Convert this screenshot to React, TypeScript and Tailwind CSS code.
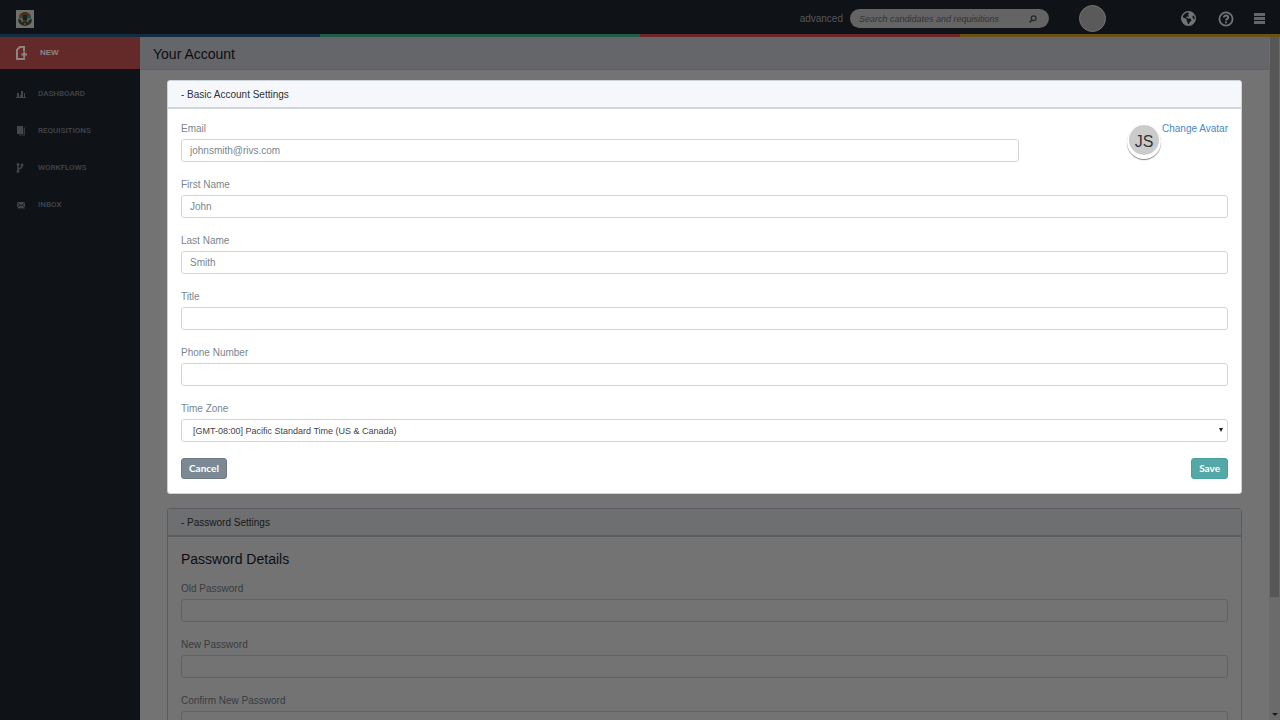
import type { ReactNode } from "react";
import { FaEarthAmericas } from "react-icons/fa6";

const FONT = "font-['Liberation_Sans',Arial,sans-serif]";

function Crest() {
  return (
    <svg viewBox="0 0 18 18" className="size-[18px]" role="img" aria-label="Company crest">
      <rect width="18" height="18" fill="#6f6f6a" />
      <path d="M3 7 Q4 2 8 3 L7 7 Z" fill="#6b2126" />
      <path d="M15 7 Q14 2 10 3 L11 7 Z" fill="#6b2126" />
      <path d="M3 6 L7 5 L7 8 L3 9 Z M11 5 L15 6 L15 9 L11 8 Z" fill="#2c4a44" />
      <path d="M7 2 H11 L12 5 L11 13 H7 L6 5 Z" fill="#3a351c" />
      <path d="M2 9 Q2 15 9 16 Q16 15 16 9 L12 10 V12 H6 V10 Z" fill="#25281f" />
      <path d="M7 5 H11 V10 H7 Z" fill="#1b2023" />
      <path d="M5 11 H7 M11 11 H13 M8 14 H10" stroke="#75683a" strokeWidth="1" />
    </svg>
  );
}

function NewIcon() {
  return (
    <svg viewBox="0 0 13 16" className="h-4 w-[13px]" fill="none" stroke="#8f8484" strokeWidth="2">
      <path d="M9 6 V2 H4.8 L2 4.8 V14 H9 V12.5" />
      <path d="M9.2 6.6 V12.4 M6.4 9.5 H12" />
    </svg>
  );
}

// Sidebar icons, all on a 10x10 grid
function BarsIcon() {
  return (
    <svg viewBox="0 0 10 10" className="size-[10px]" fill="#43464a">
      <path d="M1 4h2v4H1zM4 6h1v2H4zM5 2h2v6H5zM8 4h1v4H8zM0 8h10v1H0z" />
    </svg>
  );
}

function PagesIcon() {
  return (
    <svg viewBox="0 0 10 10" className="size-[10px]" fill="#43464a">
      <path d="M1 0h6v8H1z" />
      <path d="M7.6 1.5 H9 V9.6 H3 V8.6 H7.6 Z" fill="#35383c" />
    </svg>
  );
}

function BranchIcon() {
  return (
    <svg viewBox="0 0 10 10" className="size-[10px]" fill="none" stroke="#43464a" strokeWidth="1.5">
      <path d="M2 2 V8 M2 7 C2 5 6 6.4 6 2.4" />
      <circle cx="2" cy="1.5" r="0.7" />
      <circle cx="2" cy="8.5" r="0.7" />
      <circle cx="6" cy="2" r="0.7" />
    </svg>
  );
}

function MailIcon() {
  return (
    <svg viewBox="0 0 10 10" className="size-[10px]">
      <rect x="1" y="2" width="8" height="6.4" fill="#43464a" />
      <path d="M1 2.6 L5 5.8 L9 2.6 M1 8 L3.6 5 M9 8 L6.4 5" stroke="#0f1216" strokeWidth="0.8" fill="none" />
    </svg>
  );
}

const NAV: { label: string; icon: ReactNode }[] = [
  { label: "DASHBOARD", icon: <BarsIcon /> },
  { label: "REQUISITIONS", icon: <PagesIcon /> },
  { label: "WORKFLOWS", icon: <BranchIcon /> },
  { label: "INBOX", icon: <MailIcon /> },
];

function TopBar() {
  return (
    <header>
      <div className="flex h-[34px] items-center bg-[#0f1216] pt-[3px] pr-[15px] pl-4">
        <Crest />
        <a href="#advanced" className="ml-auto text-[10px] text-[#55585b]">
          advanced
        </a>
        <form className="ml-[7px] flex h-[19px] w-[199px] items-center rounded-full bg-[#646464] pr-3 pl-[9px]">
          <input
            type="search"
            aria-label="Search"
            placeholder="Search candidates and requisitions"
            className="min-w-0 flex-1 text-[9px] italic outline-none placeholder:text-[#303336]"
          />
          <button type="submit" aria-label="Submit search">
            <svg viewBox="0 0 8 8" className="size-2" fill="none" stroke="#24272a" strokeWidth="1.2">
              <circle cx="4.7" cy="3.2" r="2.4" />
              <path d="M3 5 L0.6 7.4" strokeWidth="1.5" />
            </svg>
          </button>
        </form>
        <button
          type="button"
          aria-label="Profile"
          className="ml-[30px] size-[27px] rounded-full border border-[#737373] bg-[#5a5a5a]"
        />
        <button type="button" aria-label="Language" className="ml-[75px] text-[#737373]">
          <FaEarthAmericas className="size-[15px]" />
        </button>
        <button type="button" aria-label="Help" className="ml-[22px]">
          <svg viewBox="0 0 16 16" className="size-4" fill="none" stroke="#737373">
            <circle cx="8" cy="8" r="6.6" strokeWidth="1.8" />
            <path d="M5.9 6.6 C5.9 3.8 10.2 4 10.2 6.5 C10.2 8 8 7.8 8 9.6" strokeWidth="2" />
            <path d="M8 10.4 V12.2" strokeWidth="2" />
          </svg>
        </button>
        <button type="button" aria-label="Menu" className="ml-5 flex w-[11px] flex-col gap-px">
          <span className="h-[3px] bg-[#666]" />
          <span className="h-[3px] bg-[#666]" />
          <span className="h-[3px] bg-[#666]" />
        </button>
      </div>
      <div className="grid h-[3px] grid-cols-4">
        <span className="bg-[#142c3f]" />
        <span className="bg-[#235c46]" />
        <span className="bg-[#6a2629]" />
        <span className="bg-[#695017]" />
      </div>
    </header>
  );
}

function Sidebar() {
  return (
    <nav className="w-[140px] shrink-0 bg-[#0f1216] text-[8px] text-[#43464a]">
      <a
        href="#new"
        className="mb-[6px] flex h-8 items-center gap-3 bg-[#632a29] pl-[15px] font-bold text-[#8f8484]"
      >
        <NewIcon />
        NEW
      </a>
      {NAV.map((item) => (
        <a
          key={item.label}
          href="#nav"
          className="flex h-[37px] items-center gap-3 pl-4 font-['Roboto',sans-serif] font-medium"
        >
          {item.icon}
          {item.label}
        </a>
      ))}
    </nav>
  );
}

type FieldProps = {
  id: string;
  label: string;
  type?: string;
  value?: string;
  dim?: boolean;
};

function Field({ id, label, type = "text", value = "", dim }: FieldProps) {
  return (
    <div>
      <label htmlFor={id} className={dim ? "block text-[#373c40]" : "block text-[#7b8590]"}>
        {label}
      </label>
      <input
        id={id}
        type={type}
        defaultValue={value}
        className={
          dim
            ? "mt-1 block h-[23px] w-full rounded-[3px] border border-[#5f6061] px-2"
            : "mt-1 block h-[23px] w-full rounded-[3px] border border-[#d4d5d6] bg-white px-2 text-[#7b8590]"
        }
      />
    </div>
  );
}

function AccountPanel() {
  return (
    <section className="overflow-hidden rounded-[3px] border border-[#ccd3d9] bg-white">
      <h2 className="h-7 border-b-2 border-[#d0d6da] bg-[#f5f7fa] px-[13px] leading-7 text-[#2b3238]">
        - Basic Account Settings
      </h2>
      <form className="px-[13px] py-[14px]">
        <div className="space-y-[17px]">
          <div className="flex items-start justify-between">
            <div className="w-4/5">
              <Field id="email" label="Email" type="email" value="johnsmith@rivs.com" />
            </div>
            <div className="flex items-start gap-[3px]">
              <span className="mt-[2px] flex size-[30px] items-center justify-center rounded-full bg-[#cbcbcb] pt-1 text-base text-[#333] shadow-[0_2px_0_2px_#fff,0_3px_1px_2px_#888]">
                JS
              </span>
              <a href="#avatar" className="text-[#428bca]">
                Change Avatar
              </a>
            </div>
          </div>
          <Field id="first-name" label="First Name" value="John" />
          <Field id="last-name" label="Last Name" value="Smith" />
          <Field id="title" label="Title" />
          <Field id="phone" label="Phone Number" type="tel" />
          <div>
            <label htmlFor="time-zone" className="block text-[#7b8590]">
              Time Zone
            </label>
            <div className="relative mt-1">
              <select
                id="time-zone"
                className="block h-[23px] w-full appearance-none rounded-[3px] border border-[#d4d5d6] bg-white px-[11px] text-[9px] text-[#444]"
              >
                <option>[GMT-08:00] Pacific Standard Time (US &amp; Canada)</option>
              </select>
              <svg
                viewBox="0 0 4 4"
                className="pointer-events-none absolute top-[9px] right-[5px] size-1"
                fill="#222"
              >
                <path d="M0 0h4L2 4z" />
              </svg>
            </div>
          </div>
        </div>
        <div className="mt-4 flex justify-between font-['Lato',sans-serif] font-bold text-white">
          <button type="button" className="h-[21px] rounded-[3px] border border-[#6c7a87] bg-[#7b8994] px-[7px] leading-[19px]">
            Cancel
          </button>
          <button type="submit" className="h-[21px] rounded-[3px] border border-[#48a0a0] bg-[#55a8a8] px-[7px] leading-[19px]">
            Save
          </button>
        </div>
      </form>
    </section>
  );
}

function PasswordPanel() {
  return (
    <section className="mt-[14px] rounded-[3px] border border-[#595c60]">
      <h2 className="h-7 border-b-2 border-[#5c5f62] bg-[#6e6f70] px-[13px] leading-7 text-[#15181b]">
        - Password Settings
      </h2>
      <form className="px-[13px] pt-[13px]">
        <h3 className="mb-[15px] text-sm leading-[18px] text-[#0c0e10]">Password Details</h3>
        <div className="space-y-[17px]">
          <Field id="old-password" label="Old Password" type="password" dim />
          <Field id="new-password" label="New Password" type="password" dim />
          <Field id="confirm-password" label="Confirm New Password" type="password" dim />
        </div>
      </form>
    </section>
  );
}

// Custom scroll track for the content pane
function ScrollTrack() {
  return (
    <div className="flex w-[11px] shrink-0 flex-col items-center justify-between bg-[#6b6b6b]">
      <span className="h-[82%] w-[9px] bg-[#575757]" />
      <svg viewBox="0 0 6 3" className="mb-1 h-[3px] w-[6px]" fill="#1c1c1c">
        <path d="M0 0h6L3 3z" />
      </svg>
    </div>
  );
}

export default function App() {
  return (
    <div className={`flex h-screen flex-col overflow-hidden bg-[#737373] text-[10px] leading-3 ${FONT}`}>
      <TopBar />
      <div className="flex min-h-0 flex-1">
        <Sidebar />
        <main className="min-w-0 flex-1 overflow-hidden">
          <h1 className="h-[33px] border-b border-[#5e6064] bg-[#65666a] px-[13px] text-sm leading-[34px] text-[#0c0e10]">
            Your Account
          </h1>
          <div className="px-[27px] pt-[10px]">
            <AccountPanel />
            <PasswordPanel />
          </div>
        </main>
        <ScrollTrack />
      </div>
    </div>
  );
}
